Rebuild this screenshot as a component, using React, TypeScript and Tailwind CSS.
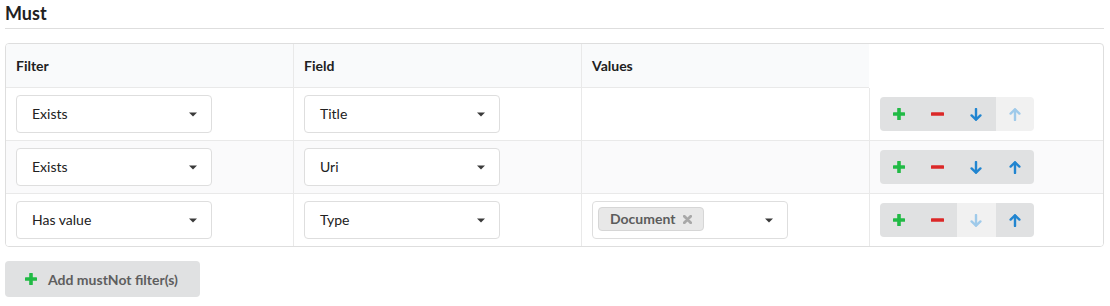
import { Fragment } from 'react'

type Row = {
  filter: string
  field: string
  values: string[]
  canDown: boolean
  canUp: boolean
}

const rows: Row[] = [
  { filter: 'Exists', field: 'Title', values: [], canDown: true, canUp: false },
  { filter: 'Exists', field: 'Uri', values: [], canDown: true, canUp: true },
  { filter: 'Has value', field: 'Type', values: ['Document'], canDown: false, canUp: true },
]

function Caret() {
  return (
    <svg width="8" height="5" viewBox="0 0 8 5" className="shrink-0">
      <path d="M0 0.5 L8 0.5 L4 4.5 Z" fill="#3a3a3a" />
    </svg>
  )
}

function PlusIcon() {
  return (
    <svg width="12" height="12" viewBox="0 0 12 12">
      <rect x="4.2" y="0" width="3.6" height="12" rx="0.6" fill="#21ba45" />
      <rect x="0" y="4.2" width="12" height="3.6" rx="0.6" fill="#21ba45" />
    </svg>
  )
}

function MinusIcon() {
  return (
    <svg width="13" height="4" viewBox="0 0 13 4">
      <rect x="0" y="0.2" width="13" height="3.6" rx="0.6" fill="#db2828" />
    </svg>
  )
}

function ArrowIcon({ up, color }: { up?: boolean; color: string }) {
  return (
    <svg width="12" height="13" viewBox="0 0 12 13" className={up ? 'rotate-180' : ''}>
      <path d="M6 1 L6 11.5" stroke={color} strokeWidth="2.4" strokeLinecap="round" />
      <path d="M1.6 7.4 L6 11.6 L10.4 7.4" stroke={color} strokeWidth="2.4" fill="none" strokeLinecap="round" strokeLinejoin="round" />
    </svg>
  )
}

function Select({ text }: { text: string }) {
  return (
    <div className="w-[196px] h-[38px] bg-white border border-[#dedede] rounded-[4px] flex items-center justify-between pl-[15px] pr-[14px]">
      <span className="text-[14px] leading-[18px] text-[#212121]">{text}</span>
      <Caret />
    </div>
  )
}

function MultiSelect({ values }: { values: string[] }) {
  return (
    <div className="w-[196px] h-[38px] bg-white border border-[#dedede] rounded-[4px] flex items-center justify-between pl-[5px] pr-[14px]">
      <div className="flex gap-1 self-start mt-[5px]">
        {values.map((v) => (
          <span
            key={v}
            className="h-[24px] flex items-center pl-[11px] pr-[11px] bg-[#e8e8e8] border border-[#d6d6d6] rounded-[4px] text-[14px] leading-[18px] font-bold text-[#5c5c5c]"
          >
            {v}
            <svg width="9" height="9" viewBox="0 0 9 9" className="ml-[8px]">
              <path d="M1.3 1.3 L7.7 7.7 M7.7 1.3 L1.3 7.7" stroke="#a8a8a8" strokeWidth="2.8" strokeLinecap="round" />
            </svg>
          </span>
        ))}
      </div>
      <Caret />
    </div>
  )
}

function ActionButtons({ canDown, canUp }: { canDown: boolean; canUp: boolean }) {
  return (
    <div className="flex rounded-[4px] overflow-hidden">
      <div className="w-[38.5px] h-[34px] bg-[#e0e1e2] flex items-center justify-center">
        <PlusIcon />
      </div>
      <div className="w-[38.5px] h-[34px] bg-[#e0e1e2] flex items-center justify-center">
        <MinusIcon />
      </div>
      <div className={`w-[38.5px] h-[34px] flex items-center justify-center ${canDown ? 'bg-[#e0e1e2]' : 'bg-[#f1f1f1]'}`}>
        <ArrowIcon color={canDown ? '#2185d0' : '#9fcaea'} />
      </div>
      <div className={`w-[38.5px] h-[34px] flex items-center justify-center ${canUp ? 'bg-[#e0e1e2]' : 'bg-[#f1f1f1]'}`}>
        <ArrowIcon up color={canUp ? '#2185d0' : '#9fcaea'} />
      </div>
    </div>
  )
}

export default function App() {
  const headers = ['Filter', 'Field', 'Values']

  return (
    <div className="w-[1110px] h-[306px] bg-white pl-[5px] pr-[6px] pt-[2px] font-['Lato',sans-serif] text-[#212121]">
      <h4 className="text-[18px] leading-[23px] font-bold pb-[3px] border-b border-[#dedede]">Must</h4>

      {/* Filter table */}
      <div className="mt-[14px] border border-[#dedede] rounded-[4px] overflow-hidden grid grid-cols-[287px_288px_288px_1fr]">
        {headers.map((h, i) => (
          <div
            key={h}
            className={`h-[44px] flex items-center px-[10px] bg-[#f9fafb] border-b border-[#e9e9e9] text-[14px] font-bold ${i > 0 ? 'border-l' : ''}`}
          >
            {h}
          </div>
        ))}
        <div className="h-[44px]" />

        {rows.map((row, i) => {
          const rowCls = `${i === 1 ? 'bg-[#fafafb]' : 'bg-white'} ${i > 0 ? 'border-t border-[#e9e9e9]' : ''}`
          return (
            <Fragment key={i}>
              <div className={`h-[52px] box-content flex items-center px-[10px] ${rowCls}`}>
                <Select text={row.filter} />
              </div>
              <div className={`h-[52px] box-content flex items-center px-[10px] border-l border-l-[#e9e9e9] ${rowCls}`}>
                <Select text={row.field} />
              </div>
              <div className={`h-[52px] box-content flex items-center px-[10px] border-l border-l-[#e9e9e9] ${rowCls}`}>
                {row.values.length > 0 && <MultiSelect values={row.values} />}
              </div>
              <div className={`h-[52px] box-content flex items-center px-[10px] border-l border-l-[#e9e9e9] ${rowCls}`}>
                <ActionButtons canDown={row.canDown} canUp={row.canUp} />
              </div>
            </Fragment>
          )
        })}
      </div>

      <button className="mt-[14px] h-[36px] w-[195px] flex items-center pl-[20px] bg-[#e0e1e2] rounded-[4px] text-[14px] font-bold text-[#5e5e5e]">
        <PlusIcon />
        <span className="ml-[11px]">Add mustNot filter(s)</span>
      </button>
    </div>
  )
}
